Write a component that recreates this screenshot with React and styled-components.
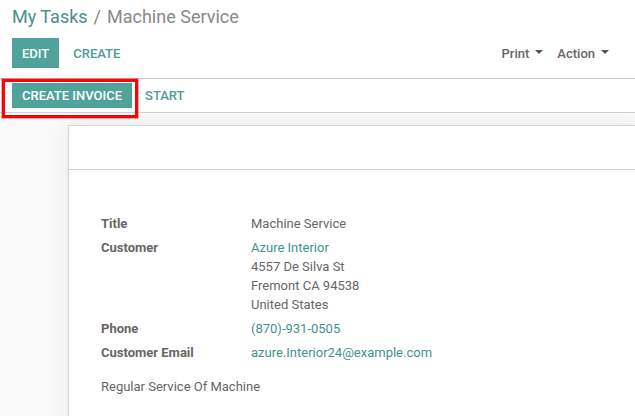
import React from "react";
import styled, { createGlobalStyle } from "styled-components";

const Global = createGlobalStyle`
  html, body { margin: 0; padding: 0; background: #fff; }
  body { width: 635px; height: 416px; overflow: hidden; font-family: Roboto, "Liberation Sans", sans-serif; font-size: 13px; color: #666; }
`;
const Page = styled.div`
  width: 635px; height: 416px; overflow: hidden; display: flex; flex-direction: column; position: relative;
`;
const Header = styled.header`
  flex: none; height: 72px; padding: 6px 12px 0; border-bottom: 1px solid #ccc;
`;
const Breadcrumb = styled.div`
  font-size: 18px; line-height: 21px; height: 32px; display: flex; gap: 6px; color: #888;
`;
const Crumb = styled.a`color: #4b8f8b;`;
const ActionRow = styled.div`display: flex; align-items: center; height: 30px;`;
const PrimaryBtn = styled.button`
  border: 0; background: #4fa39b; color: #fff; font: 500 13px Roboto, sans-serif; height: ${p => p.$h}px; padding: 0 ${p => p.$px}px; text-transform: uppercase;
`;
const LinkBtn = styled.button`
  border: 0; background: none; color: #4f9a94; font: 500 13px Roboto, sans-serif; padding: 0 ${p => p.$px}px; text-transform: uppercase;
`;
const Right = styled.div`margin-left: auto; display: flex; gap: 14px; padding-right: 14px;`;
const Drop = styled.span`
  font-weight: 500; font-size: 13px; color: #666; display: inline-flex; align-items: center; gap: 6px;
  &::after { content: ""; border-top: 4px solid #555; border-left: 4px solid transparent; border-right: 4px solid transparent; margin-top: -2px; }
`;
const StatusBar = styled.div`
  flex: none; height: 34px; box-sizing: border-box; border-bottom: 1px solid #ccd0d8; display: flex; align-items: center; padding: 0 0 0 12px;
`;
const Highlight = styled.div`
  position: absolute; left: 2px; top: 79px; width: 130px; height: 33px; border: 3px solid #f00808; outline: 1px solid rgba(240,8,8,.35);
`;
const Canvas = styled.div`
  flex: 1; background: #f9f9f9; padding: 12px 0 0 68px; overflow: hidden;
`;
const Sheet = styled.div`
  background: #fff; border: 1px solid #cfd3da; border-right: 0; height: 400px; box-shadow: 0 0 20px rgba(0,0,0,.07);
`;
const SheetTop = styled.div`height: 43px; border-bottom: 1px solid #cfd3da;`;
const SheetBody = styled.div`padding: 44px 0 0 32px; line-height: 19px;`;
const Row = styled.div`display: grid; grid-template-columns: 150px 1fr; margin-bottom: 5px;`;
const Label = styled.div`font-weight: 700; color: #666;`;
const Value = styled.div`color: #666;`;
const Link = styled.a`color: #3f938e; display: block;`;
const Note = styled.p`margin: 15px 0 0; color: #666;`;

export default function App() {
  return (
    <Page>
      <Global />
      <Header>
        <Breadcrumb><Crumb>My Tasks</Crumb><span>/</span><span>Machine Service</span></Breadcrumb>
        <ActionRow>
          <PrimaryBtn $h={30} $px={10}>Edit</PrimaryBtn>
          <LinkBtn $px={14}>Create</LinkBtn>
          <Right><Drop>Print</Drop><Drop>Action</Drop></Right>
        </ActionRow>
      </Header>
      <StatusBar>
        <PrimaryBtn $h={25} $px={10}>Create Invoice</PrimaryBtn>
        <LinkBtn $px={13}>Start</LinkBtn>
      </StatusBar>
      <Highlight />
      <Canvas>
        <Sheet>
          <SheetTop />
          <SheetBody>
            <Row><Label>Title</Label><Value>Machine Service</Value></Row>
            <Row><Label>Customer</Label><Value><Link>Azure Interior</Link>4557 De Silva St<br />Fremont CA 94538<br />United States</Value></Row>
            <Row><Label>Phone</Label><Link>(870)-931-0505</Link></Row>
            <Row><Label>Customer Email</Label><Link>azure.Interior24@example.com</Link></Row>
            <Note>Regular Service Of Machine</Note>
          </SheetBody>
        </Sheet>
      </Canvas>
    </Page>
  );
}
